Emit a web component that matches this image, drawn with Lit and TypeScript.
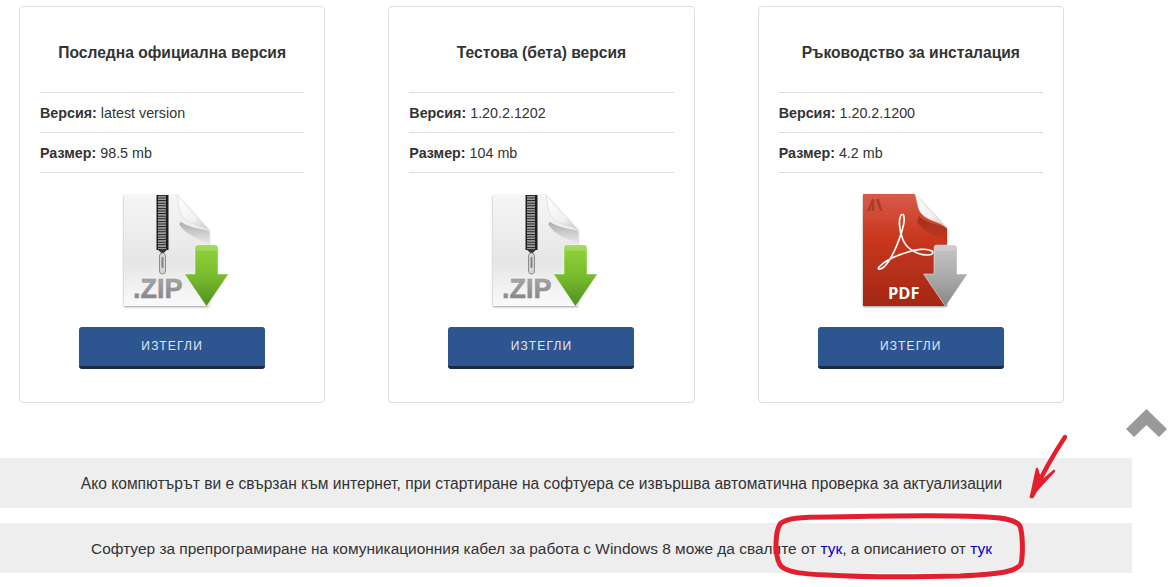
import { LitElement, html, css, svg } from "lit";
import { customElement } from "lit/decorators.js";

const arrow = (id: string) => svg`
  <path d="M87 60 Q87 57 90 57 H107 Q110 57 110 60 L110 86 H120.5 L98.5 118.5 L76.5 86 H87 Z" fill="url(#${id})" stroke="#fff" stroke-opacity=".6" stroke-width=".8"/>
  <path d="M88 60 Q88 58 90 58 H107 Q109 58 109 60 V63 H88 Z" fill="#fff" fill-opacity=".16"/>`;

const zipIcon = svg`
<svg class="icon" viewBox="0 0 128 128" width="128" height="128">
  <defs>
    <linearGradient id="zp" x1="0" y1="0" x2="0" y2="1"><stop offset="0" stop-color="#f6f6f6"/><stop offset=".6" stop-color="#e6e6e6"/><stop offset="1" stop-color="#fafafa"/></linearGradient>
    <linearGradient id="zf" x1="0" y1="0" x2="1" y2="1"><stop offset="0" stop-color="#fff"/><stop offset=".6" stop-color="#f2f2f2"/><stop offset="1" stop-color="#c6c6c6"/></linearGradient>
    <linearGradient id="zh" x1="0" y1="0" x2="0" y2="1"><stop offset="0" stop-color="#000" stop-opacity=".28"/><stop offset="1" stop-color="#000" stop-opacity="0"/></linearGradient>
    <linearGradient id="za" x1="0" y1="0" x2="0" y2="1"><stop offset="0" stop-color="#8fd637"/><stop offset=".55" stop-color="#76b82c"/><stop offset="1" stop-color="#4e8f20"/></linearGradient>
    <linearGradient id="zt" x1="0" y1="0" x2="0" y2="1"><stop offset="0" stop-color="#adadad"/><stop offset="1" stop-color="#7f7f7f"/></linearGradient>
    <filter id="zs" x="-10%" y="-10%" width="120%" height="120%"><feDropShadow dx="0" dy="1" stdDeviation="1.3" flood-color="#000" flood-opacity=".4"/></filter>
    <pattern id="zz" width="12" height="2.6" patternUnits="userSpaceOnUse"><rect width="12" height="2.6" fill="#1f1f1f"/><rect x="2" y=".2" width="8" height="1.4" fill="#b4b4b4"/></pattern>
  </defs>
  <path d="M16 7 H69 L101 42 V118 H16 Z" fill="url(#zp)" filter="url(#zs)"/>
  <path d="M73 34 C82 40 92 40 101 43 V56 C90 50 78 48 71 36 Z" fill="url(#zh)"/>
  <path d="M69 7 C71 16 70 26 77 31 C84 37 92 37 101 42 Z" fill="url(#zf)" stroke="#d4d4d4" stroke-width=".6"/>
  <rect x="48.500" y="7" width="12" height="55" fill="url(#zz)"/>
  <path d="M49 61 L54.500 66 L60 61 Z" fill="#333"/>
  <rect x="51.500" y="65" width="6" height="21" rx="3" fill="#d6d6d6" stroke="#8d8d8d" stroke-width="1"/>
  <rect x="53.500" y="69" width="2" height="11" rx="1" fill="#838383"/>
  <text x="25" y="110" font-family="'Liberation Sans',sans-serif" font-weight="700" font-size="27" fill="url(#zt)" stroke="#8f8f8f" stroke-width=".5">.ZIP</text>
  ${arrow("za")}
</svg>`;

const pdfIcon = svg`
<svg class="icon" viewBox="0 0 128 128" width="128" height="128">
  <defs>
    <linearGradient id="pp" x1="0" y1="0" x2="0" y2="1"><stop offset="0" stop-color="#d95a49"/><stop offset=".4" stop-color="#c8371d"/><stop offset="1" stop-color="#a32816"/></linearGradient>
    <linearGradient id="pf" x1="0" y1="0" x2="1" y2="1"><stop offset="0" stop-color="#fff"/><stop offset=".6" stop-color="#f0f0f0"/><stop offset="1" stop-color="#c8c8c8"/></linearGradient>
    <linearGradient id="ph" x1="0" y1="0" x2="0" y2="1"><stop offset="0" stop-color="#5a0f05" stop-opacity=".45"/><stop offset="1" stop-color="#5a0f05" stop-opacity="0"/></linearGradient>
    <linearGradient id="pa" x1="0" y1="0" x2="0" y2="1"><stop offset="0" stop-color="#c6c6c6"/><stop offset=".55" stop-color="#a8a8a8"/><stop offset="1" stop-color="#868686"/></linearGradient>
    <filter id="ps" x="-10%" y="-10%" width="120%" height="120%"><feDropShadow dx="0" dy="1" stdDeviation="1.3" flood-color="#000" flood-opacity=".4"/></filter>
  </defs>
  <path d="M16 7 Q16 6 17 6 H68 L100 40 V118 H16 Z" fill="url(#pp)" filter="url(#ps)"/>
  <path d="M72 28 C80 36 90 36 100 40 V54 C90 48 78 46 70 34 Z" fill="url(#ph)"/>
  <path d="M68 6 C71 14 70 22 76 27 C82 33 92 33 100 40 Z" fill="url(#pf)" stroke="#e4e4e4" stroke-width=".6"/>
  <path d="M20 23 L25 11 H27.500 V23 H25 V17 L23 23 Z M29.500 11 H32 L35.500 23 H33 L29.500 14 Z" fill="#a63f2b"/>
  <path d="M55 26 C51 30 52 42 56 52 C60 61 70 67 81 67 C85 67 87 65 85 63 C80 60 68 61 58 65 C48 68 38 73 32 79 C30 82 33 82 37 79 C44 72 50 58 54 46 C57 37 58 29 56 26"
        fill="none" stroke="#fff" stroke-width="1.700" stroke-linejoin="round"/>
  <text x="41" y="111" font-family="'Open Sans','Liberation Sans',sans-serif" font-weight="700" font-size="16.500" fill="#fff">PDF</text>
  ${arrow("pa")}
</svg>`;

const cards = [
  { title: "Последна официална версия", version: "latest version", size: "98.5 mb", icon: zipIcon },
  { title: "Тестова (бета) версия", version: "1.20.2.1202", size: "104 mb", icon: zipIcon },
  { title: "Ръководство за инсталация", version: "1.20.2.1200", size: "4.2 mb", icon: pdfIcon },
];

@customElement("app-root")
export class AppRoot extends LitElement {
  static styles = css`
    :host {
      display: block;
      position: relative;
      height: 587px;
      overflow: hidden;
      background: #fff;
      font-family: "Liberation Sans", Arial, sans-serif;
      color: #333;
      font-size: 14.3px;
    }
    .cards {
      display: grid;
      grid-template-columns: repeat(3, 306.33px);
      column-gap: 63px;
      padding: 6px 0 0 19px;
    }
    .card {
      box-sizing: border-box;
      height: 397px;
      border: 1px solid #ddd;
      border-radius: 4px;
      padding: 0 20px;
      display: flex;
      flex-direction: column;
      align-items: stretch;
    }
    .title {
      margin: 0;
      height: 85px;
      box-sizing: border-box;
      padding-top: 7px;
      display: flex;
      align-items: center;
      justify-content: center;
      font-size: 15.6px;
      font-weight: 700;
      color: #333;
    }
    .row {
      height: 40px;
      box-sizing: border-box;
      border-top: 1px solid #ddd;
      display: flex;
      align-items: center;
      gap: 4px;
      line-height: 20px;
    }
    .row.last { border-bottom: 1px solid #ddd; height: 41px; }
    .row b { font-weight: 700; }
    .icon { display: block; margin: 15px auto 11px; flex: none; }
    .btn {
      align-self: center;
      width: 186px;
      height: 42px;
      box-sizing: border-box;
      border: 0;
      border-bottom: 3px solid #1b2a44;
      border-radius: 3px;
      background: #2d5590;
      color: #e2e8f2;
      font: 12px "Liberation Sans", Arial, sans-serif;
      letter-spacing: 1.2px;
      padding: 0 0 2px;
    }
    .notes {
      display: flex;
      flex-direction: column;
      gap: 15px;
      width: 1132px;
      margin-top: 55px;
    }
    .note {
      height: 50px;
      box-sizing: border-box;
      background: #eee;
      padding: 2px 49px 0 0;
      display: flex;
      align-items: center;
      justify-content: center;
      font-size: 15.6px;
      color: #333;
      white-space: pre;
    }
    .note.second { font-size: 15.45px; }
    .note a { color: #0000cc; text-decoration: none; }
    .up { position: absolute; left: 1126px; top: 409px; }
    .marks { position: absolute; left: 0; top: 0; pointer-events: none; }
  `;

  render() {
    return html`
      <div class="cards">
        ${cards.map(
          (c) => html`
            <section class="card">
              <h3 class="title">${c.title}</h3>
              <div class="row"><b>Версия:</b> <span>${c.version}</span></div>
              <div class="row last"><b>Размер:</b> <span>${c.size}</span></div>
              ${c.icon}
              <button class="btn">ИЗТЕГЛИ</button>
            </section>
          `
        )}
      </div>
      <div class="notes">
        <div class="note">Ако компютърът ви е свързан към интернет, при стартиране на софтуера се извършва автоматична проверка за актуализации</div>
        <div class="note second"><span>Софтуер за препрограмиране на комуникационния кабел за работа с Windows 8 може да свалите от <a href="#">тук</a>, а описанието от <a href="#">тук</a></span></div>
      </div>
      <svg class="up" width="41" height="29" viewBox="0 0 41 29"><path d="M20.500 0 L41 20 L33 28 L20.500 16 L8 28 L0 20 Z" fill="#999"/></svg>
      <svg class="marks" width="1175" height="587" viewBox="0 0 1175 587" fill="none" stroke="#e21f2e" stroke-linecap="round" stroke-linejoin="round">
        <path d="M1065 437 C1055 452 1042 475 1032 496" stroke-width="4.500"/>
        <path d="M1031 497 C1033 487 1035 478 1037 469 L1041 482 L1054 471 C1046 480 1038 488 1031 497 Z" fill="#e21f2e" stroke-width="2.500"/>
        <path d="M780 524 C786 518 800 517 830 517 C880 516 950 515 987 517 C1005 518 1016 520 1020 526 C1023 535 1023 555 1021 564 C1016 572 1000 574 960 576 C920 577 860 577 827 575 C805 574 790 573 782 567 C775 561 774 535 780 524 Z" stroke-width="5"/>
      </svg>
    `;
  }
}
